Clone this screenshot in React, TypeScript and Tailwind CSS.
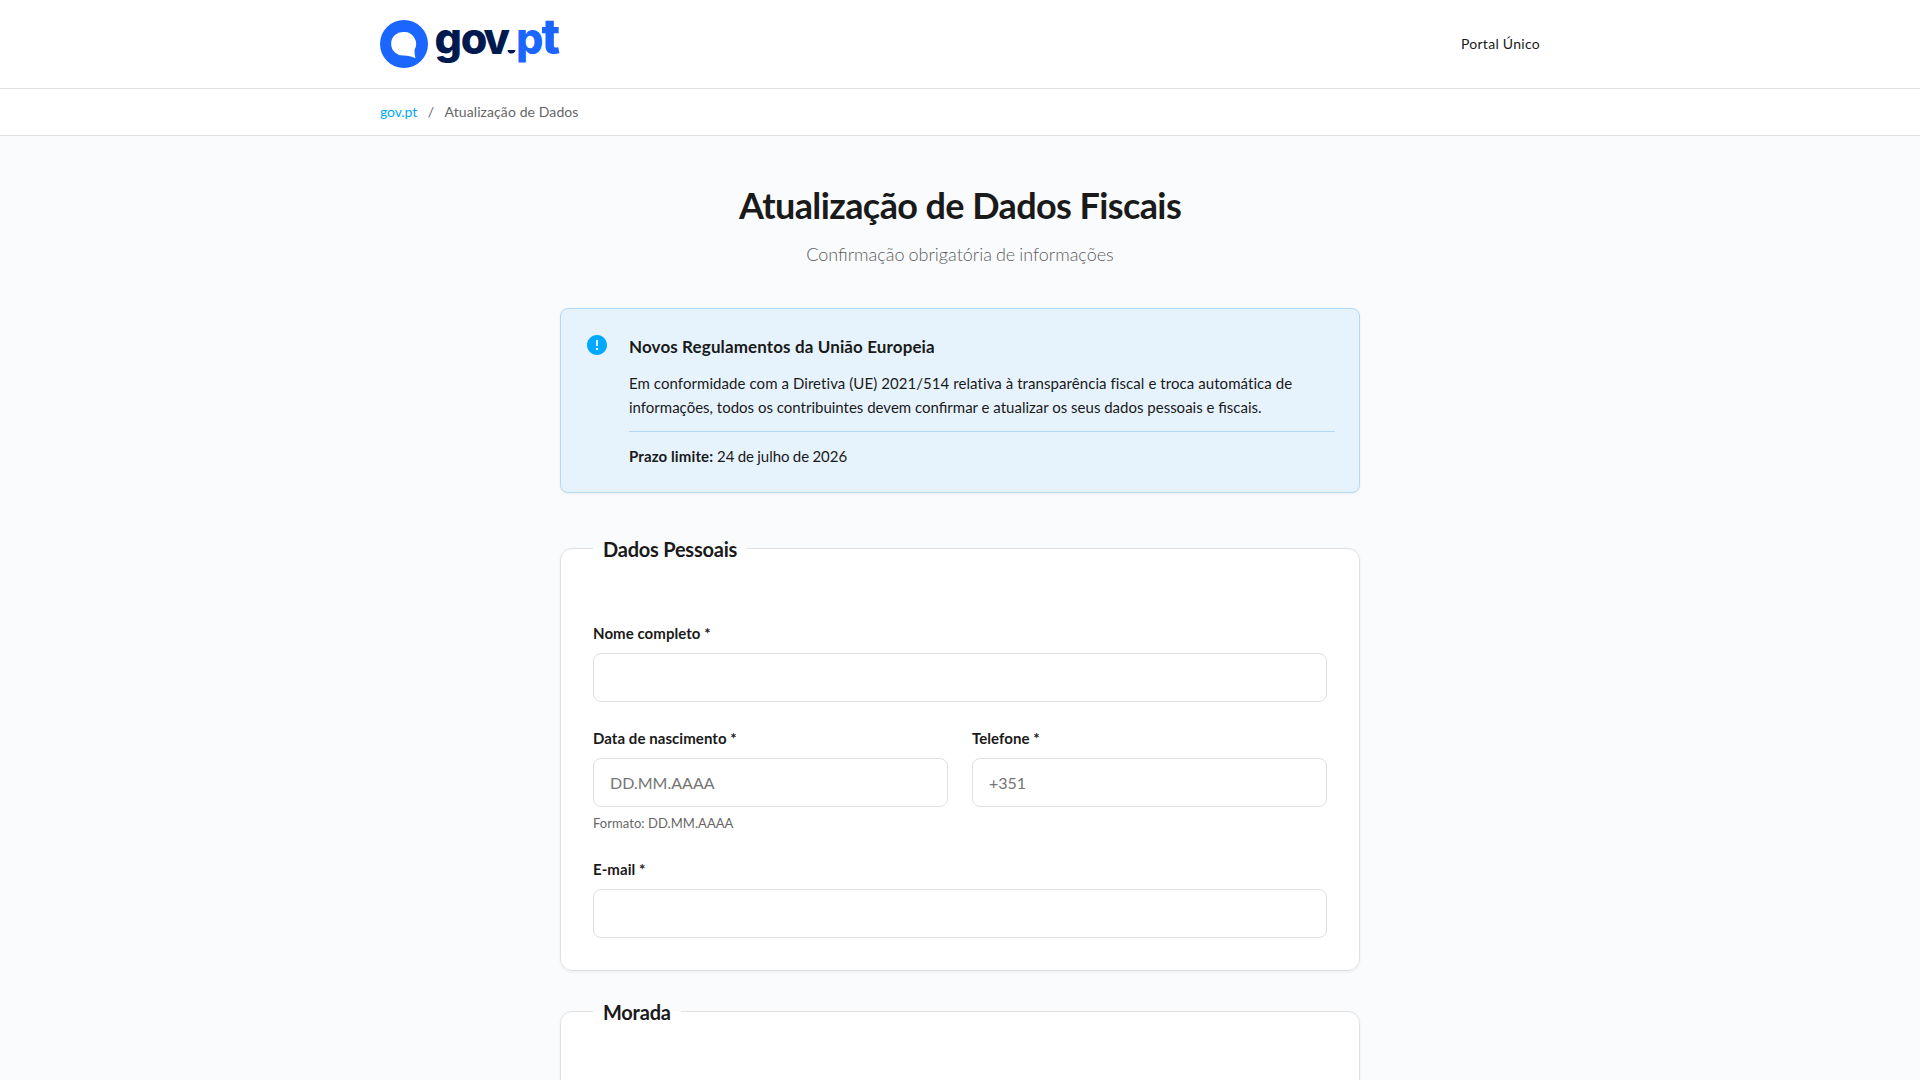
import type { ReactNode } from "react";

interface FieldProps {
  id: string;
  label: string;
  type?: string;
  placeholder?: string;
  hint?: string;
}

function Field({ id, label, type = "text", placeholder, hint }: FieldProps) {
  return (
    <div className="mb-6">
      <label
        htmlFor={id}
        className="mb-2 block text-[15px] leading-6 font-bold tracking-[0.06px]"
      >
        {label} *
      </label>
      <input
        id={id}
        type={type}
        placeholder={placeholder}
        className="block h-[49px] w-full rounded-lg border border-[#e0e0e0] bg-white px-4 text-base placeholder:text-[#757575]"
      />
      {hint && (
        <small className="mt-1.5 block text-[13px] leading-5 tracking-[0.05px] text-[#666]">
          {hint}
        </small>
      )}
    </div>
  );
}

function Section({ title, children }: { title: string; children?: ReactNode }) {
  return (
    <fieldset className="mb-6 min-h-60 rounded-xl border border-[#e0e0e0] bg-white px-8 pt-8 pb-2 shadow-[0_1px_3px_rgba(0,0,0,0.06)]">
      <legend className="mb-6 px-2.5 pt-px text-xl leading-8 font-bold tracking-[-0.23px]">
        {title}
      </legend>
      {children}
    </fieldset>
  );
}

function Logo() {
  return (
    <svg
      width="182"
      height="48"
      viewBox="0 0 182 48"
      className="overflow-visible"
      aria-label="gov.pt"
    >
      <circle cx="24" cy="24" r="24" fill="#1a66ff" />
      <path
        d="M24 12a11.800 11.800 0 1 0 0 23.500c4 0 7.500 1 11.400 2.700-.5-2.900-1-5.700-.8-8.700A11.800 11.800 0 0 0 24 12Z"
        fill="#fff"
      />
      <text
        x="54.5 80.8 103.5 136 161.500"
        y="33.5"
        fill="#001a4f"
        fontFamily="Inter, sans-serif"
        fontWeight="800"
        fontSize="43"
      >
        gov
        <tspan fill="#1a66ff">
          p<tspan fontSize="49">t</tspan>
        </tspan>
      </text>
      <path d="M127.500 30h8c-.3 2.300-1.700 3.500-4 3.500s-3.700-1.200-4-3.500Z" fill="#001a4f" />
    </svg>
  );
}

export default function App() {
  return (
    <div className="h-[1080px] overflow-hidden bg-[#fafbfd] font-['Lato',sans-serif] text-[#1a1a1a]">
      <header className="border-b border-[#e0e0e0] bg-white shadow-[0_1px_3px_rgba(0,0,0,0.06)]">
        <div className="mx-auto flex h-[88px] w-[1160px] items-center justify-between">
          <Logo />
          <a className="text-sm tracking-[0.28px]">Portal Único</a>
        </div>
      </header>

      <nav className="border-b border-[#e0e0e0] bg-white">
        <div className="mx-auto flex h-[46px] w-[1160px] items-center text-sm text-[#666]">
          <a className="tracking-[-0.1px] text-[#00a8ff]">gov.pt</a>
          <span className="mx-[10.5px]">/</span>
          <span className="tracking-[0.1px]">Atualização de Dados</span>
        </div>
      </nav>

      <main className="mx-auto w-[800px] pt-12">
        <div className="mb-[39px] text-center">
          <h1 className="mb-[13px] text-4xl leading-[43px] font-bold tracking-[-0.6px]">
            Atualização de Dados Fiscais
          </h1>
          <p className="text-lg leading-[29px] font-light text-[#5c5c5c] [word-spacing:-0.9px]">
            Confirmação obrigatória de informações
          </p>
        </div>

        <div className="mb-[39px] flex gap-5 rounded-lg border border-[#b3d9f5] bg-[#e6f3fd] p-6 shadow-[0_1px_3px_rgba(0,0,0,0.06)]">
          <svg width="24" height="24" viewBox="0 0 24 24" fill="#00a8ff" className="shrink-0">
            <path d="M12 2C6.480 2 2 6.480 2 12s4.480 10 10 10 10-4.480 10-10S17.520 2 12 2zm1 15h-2v-2h2v2zm0-4h-2V7h2v6z" />
          </svg>
          <div className="flex-1">
            <h2 className="mb-[11px] text-[17px] leading-[27px] font-bold tracking-[0.12px]">
              Novos Regulamentos da União Europeia
            </h2>
            <p className="text-[15px] leading-6">
              <span className="tracking-[0.07px]">
                Em conformidade com a Diretiva (UE) 2021/514 relativa à
                transparência fiscal e troca automática de
              </span>{" "}
              informações, todos os contribuintes devem confirmar e atualizar os
              seus dados pessoais e fiscais.
            </p>
            <p className="mt-3 border-t border-[#b3d9f5] pt-3 text-[15px] leading-6">
              <strong className="font-bold tracking-[0.12px]">
                Prazo limite:
              </strong>{" "}
              <span className="[word-spacing:-0.6px]">24 de julho de 2026</span>
            </p>
          </div>
        </div>

        <Section title="Dados Pessoais">
          <Field id="nome" label="Nome completo" />
          <div className="grid grid-cols-2 gap-6">
            <Field
              id="nascimento"
              label="Data de nascimento"
              placeholder="DD.MM.AAAA"
              hint="Formato: DD.MM.AAAA"
            />
            <Field id="telefone" label="Telefone" type="tel" placeholder="+351" />
          </div>
          <Field id="email" label="E-mail" type="email" />
        </Section>

        <Section title="Morada" />
      </main>
    </div>
  );
}
